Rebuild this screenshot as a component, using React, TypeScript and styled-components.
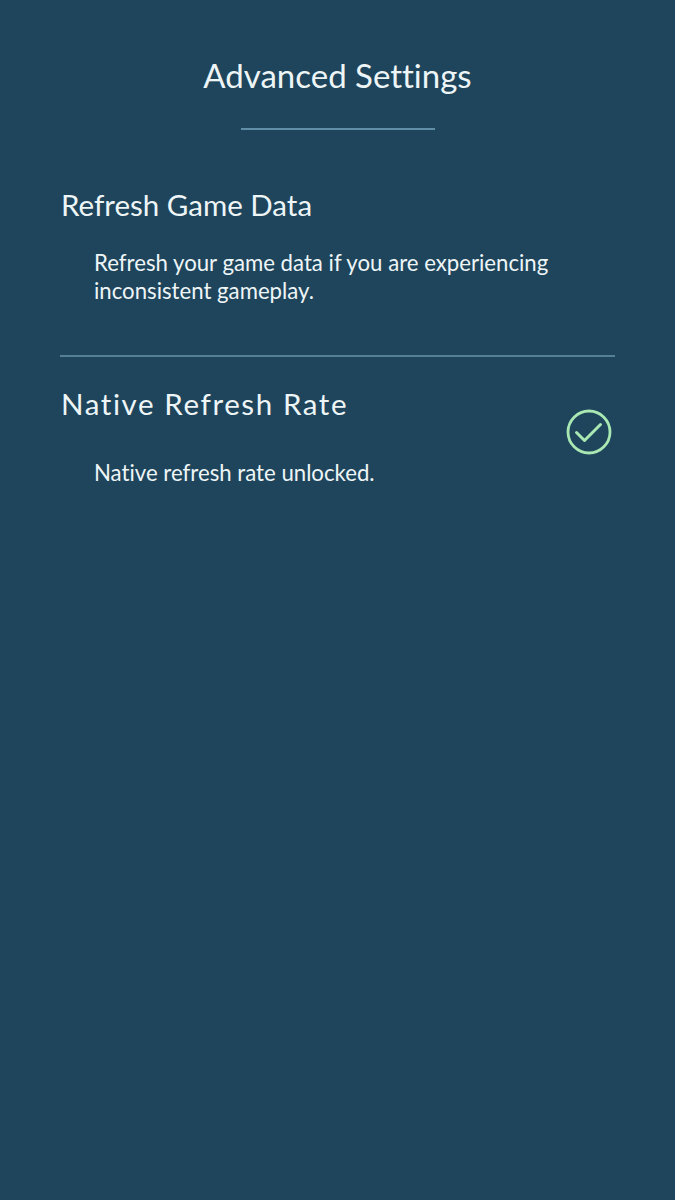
import React from "react";
import styled, { createGlobalStyle } from "styled-components";

const GlobalStyle = createGlobalStyle`
  html, body {
    margin: 0;
    padding: 0;
    background: #1e455b;
  }
  body {
    font-family: Lato, "Open Sans", sans-serif;
    font-variant-ligatures: none;
    color: #eef5f7;
  }
`;

export default function App() {
  return (
    <>
      <GlobalStyle />
      <SPage>
        <SHeader>
          <STitle>Advanced Settings</STitle>
          <SHeaderRule />
        </SHeader>

        <SSection>
          <SSectionBody>
            <SSectionTitle $top={58}>Refresh Game Data</SSectionTitle>
            <SDescription $gap={27}>
              Refresh your game data if you are experiencing
              <br />
              inconsistent gameplay.
            </SDescription>
          </SSectionBody>
        </SSection>

        <SDivider />

        <SSection>
          <SSectionBody>
            <SSectionTitle $top={30} $spaced>
              Native Refresh Rate
            </SSectionTitle>
            <SDescription $gap={38}>Native refresh rate unlocked.</SDescription>
          </SSectionBody>
          <CheckBadge />
        </SSection>
      </SPage>
    </>
  );
}

// green ring with a tick, shown once the option is unlocked
function CheckBadge() {
  return (
    <SCheck viewBox="0 0 46 46" width="46" height="46">
      <circle cx="23" cy="23" r="21" fill="none" stroke="#a9e8b3" strokeWidth="2.8" />
      <path
        d="M10.5 23.5 L18.5 31.5 L34.5 15.5"
        fill="none"
        stroke="#a9e8b3"
        strokeWidth="3"
        strokeLinecap="round"
        strokeLinejoin="round"
      />
    </SCheck>
  );
}

const SPage = styled.main`
  min-height: 1200px;
  box-sizing: border-box;
  padding: 0 60px;
  display: flex;
  flex-direction: column;
`;

const SHeader = styled.header`
  display: flex;
  flex-direction: column;
  align-items: center;
  padding-top: 56px;
`;

const STitle = styled.h1`
  margin: 0;
  font-size: 33px;
  font-weight: 400;
  line-height: 38px;
`;

const SHeaderRule = styled.div`
  width: 194px;
  height: 2px;
  background: #5f8ea6;
  margin-top: 34px;
`;

const SSection = styled.section`
  display: flex;
  align-items: flex-start;
  justify-content: space-between;
  padding-left: 1px;
`;

const SSectionBody = styled.div`
  display: flex;
  flex-direction: column;
`;

const SSectionTitle = styled.h2<{ $top: number; $spaced?: boolean }>`
  margin: ${(p) => p.$top}px 0 0 0;
  font-size: 29.5px;
  font-weight: 400;
  line-height: 34px;
  letter-spacing: ${(p) => (p.$spaced ? "1.6px" : "0")};
`;

const SDescription = styled.p<{ $gap: number }>`
  margin: ${(p) => p.$gap}px 0 0 33px;
  font-size: 22.2px;
  line-height: 28px;
`;

const SDivider = styled.hr`
  border: none;
  height: 2px;
  background: #557f96;
  margin: 50px 0 0 0;
`;

const SCheck = styled.svg`
  flex: none;
  margin-top: 52px;
  margin-right: 3px;
`;
